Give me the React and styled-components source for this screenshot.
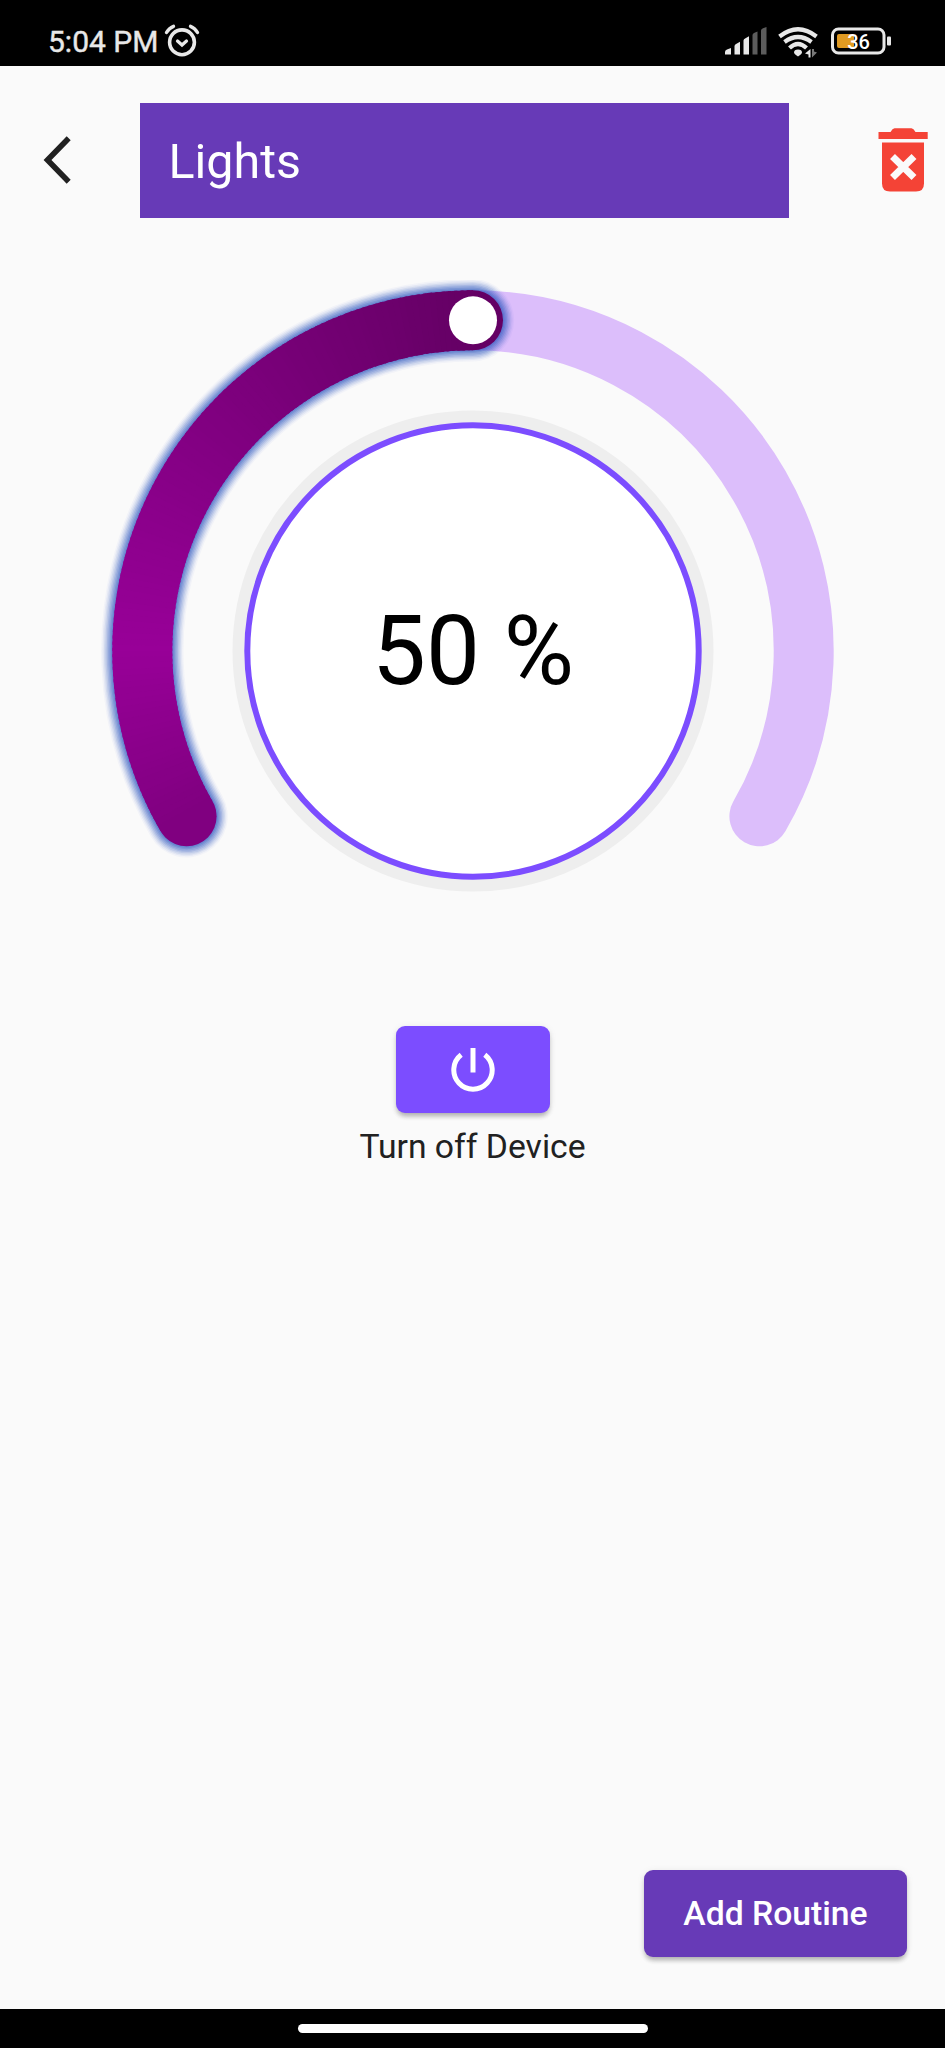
import React from 'react';
import styled, { createGlobalStyle } from 'styled-components';

const GlobalStyle = createGlobalStyle`
  * { box-sizing: border-box; }
  body { margin: 0; background: #fafafa; font-family: Roboto, "Liberation Sans", sans-serif; }
  button { font-family: inherit; border: 0; padding: 0; background: none; }
  svg { display: block; flex: none; }
`;

const Screen = styled.div`
  width: 945px;
  height: 2048px;
  display: flex;
  flex-direction: column;
  background: #fafafa;
  color: #212121;
`;

const StatusBar = styled.header`
  height: 66px;
  flex: none;
  display: flex;
  justify-content: space-between;
  padding: 24px 54px 0 48px;
  background: #000;
  color: #e8e8e8;
`;

const StatusGroup = styled.div`
  display: flex;
  align-items: flex-start;
  gap: ${(p) => p.$gap}px;
  padding-top: ${(p) => p.$drop || 0}px;
`;

const Clock = styled.span`
  font-size: 30px;
  line-height: 36px;
  font-weight: 400;
  -webkit-text-stroke: 0.4px #e8e8e8;
`;

const TitleRow = styled.div`
  display: flex;
  align-items: center;
  height: 115px;
  margin-top: 36.5px;
  padding: 0 16.5px 0 43px;
`;

const IconButton = styled.button`
  display: flex;
  color: ${(p) => p.$color};
`;

const TitleBox = styled.h1`
  width: 649px;
  height: 115px;
  margin: 0 89px 0 68.5px;
  padding: 3px 0 0 29px;
  line-height: 112px;
  font-size: 48.4px;
  font-weight: 400;
  color: #fff;
  background: #673ab7;
`;

const DialArea = styled.div`
  display: flex;
  justify-content: center;
  margin-top: 62.5px;
`;

const DialText = styled.text`
  font-family: Roboto, sans-serif;
  font-size: 96px;
  fill: #000;
`;

const DeviceControls = styled.section`
  display: flex;
  flex-direction: column;
  align-items: center;
  margin-top: 96px;
`;

const RaisedButton = styled.button`
  display: flex;
  align-items: center;
  justify-content: center;
  width: ${(p) => p.$width}px;
  height: 87px;
  border-radius: 9px;
  background: ${(p) => p.$color};
  color: #fff;
  font-size: 33.7px;
  font-weight: 500;
  box-shadow: 0 5px 5px -2px rgba(0, 0, 0, 0.18), 0 3px 5px rgba(0, 0, 0, 0.12),
    0 1px 8px rgba(0, 0, 0, 0.06);
`;

const Caption = styled.p`
  margin: 14px 0 0;
  font-size: 33.7px;
  line-height: 40px;
`;

const Footer = styled.div`
  display: flex;
  justify-content: flex-end;
  margin-top: auto;
  padding: 0 38px 52px 0;
`;

const NavBar = styled.footer`
  display: flex;
  justify-content: center;
  height: 39px;
  flex: none;
  padding-top: 15px;
  background: #000;
`;

const HomePill = styled.div`
  width: 350px;
  height: 9px;
  border-radius: 5px;
  background: #fff;
`;

const AlarmIcon = () => (
  <svg width="36" height="34" viewBox="0 0 36 34" fill="none" stroke="#e8e8e8" strokeLinecap="round">
    <circle cx="18" cy="18.3" r="12.4" strokeWidth="3.6" />
    <path d="M13.500 17l4.500 4 4.500-4" strokeWidth="3.2" />
    <path d="M2.500 8.500q2.500-4.500 7-6.200M33.500 8.500q-2.500-4.500-7-6.200" strokeWidth="3.4" />
  </svg>
);

const SignalIcon = () => (
  <svg width="42" height="28" viewBox="0 0 42 28">
    <path fill="#e8e8e8" d="M0 27.500V25q0-2 2-2.500l4-1.500V27.500zM9.500 27.500V19q0-1.500 2-2.200l3.500-2V27.500zM18.500 27.500V13.500q0-1.500 2-2.200l3.500-2V27.500z" />
    <path fill="#5c5c5c" d="M27.500 27.500V8q0-1.500 2-2.200l3-1.300V27.500zM36 27.500V3.500q0-1.500 2-2.200l3.500-1.300V27.500z" />
  </svg>
);

const WifiIcon = () => (
  <svg width="42" height="32" viewBox="0 0 42 32" fill="none" stroke="#e8e8e8" strokeWidth="4.200">
    <path d="M1.500 9.500Q20 -5 38.500 9.500" />
    <path d="M6.500 15Q20 5 33.500 15" />
    <path d="M11.500 21Q20 13 28.500 21" />
    <path d="M16 25.500q0-3 4-3t4 3q0 1.500-4 4q-4-2.500-4-4z" fill="#e8e8e8" stroke="none" />
    <path d="M32.500 22v8.500h-2V27.500l-3.500-1z" fill="#e8e8e8" stroke="none" />
    <path d="M34 30.500v-8.500h2v2.500l3 1z" fill="#777" stroke="none" />
  </svg>
);

const BatteryIcon = () => (
  <svg width="60" height="28" viewBox="0 0 60 28">
    <rect x="1.500" y="2" width="51.500" height="24" rx="6" fill="none" stroke="#e8e8e8" strokeWidth="3" />
    <rect x="56" y="9.500" width="4" height="9" rx="1" fill="#e8e8e8" />
    <rect x="6" y="7" width="17" height="14" rx="2" fill="#e09a22" />
    <text x="27.500" y="21.500" textAnchor="middle" fontFamily="Roboto, sans-serif" fontWeight="500" fontSize="20" fill="#fff">36</text>
  </svg>
);

const BackIcon = () => (
  <svg width="28" height="48" viewBox="0 0 28 48" fill="none" stroke="currentColor" strokeWidth="5.600">
    <path d="M25.700 2.300L4.500 24 25.700 45.700" />
  </svg>
);

const TrashIcon = () => (
  <svg width="50" height="64" viewBox="0 0 50 64">
    <path fill="currentColor" d="M0.500 4H12.500q2-3.700 4-3.700h17q2 0 4 3.700H49.700v7H0.500zM4 14.500h42v41q0 8-8 8H12q-8 0-8-8z" />
    <path d="M14.500 28.500l21.500 21M36 28.500l-21.500 21" stroke="#fafafa" strokeWidth="7" />
  </svg>
);

const PowerIcon = () => (
  <svg width="44" height="44" viewBox="0 0 44 44" fill="none" stroke="currentColor" strokeWidth="5">
    <path d="M22 0v24.500" />
    <path d="M10.200 6.800a19.200 19.200 0 1 0 23.600 0" />
  </svg>
);

const CX = 380;
const CY = 371;
const RADIUS = 330.7;
const BAR = 60;

const point = (deg) => {
  const a = (deg * Math.PI) / 180;
  return [CX + RADIUS * Math.cos(a), CY + RADIUS * Math.sin(a)];
};

const arc = (from, to) => {
  const [x1, y1] = point(from);
  const [x2, y2] = point(to);
  return `M${x1} ${y1}A${RADIUS} ${RADIUS} 0 ${to - from > 180 ? 1 : 0} 1 ${x2} ${y2}`;
};

// Purple brightens from the start of the arc to 180deg, then darkens to the thumb.
const shade = (deg) => {
  const v = deg < 180 ? 128 + ((deg - 150) / 30) * 24 : 152 - ((deg - 180) / 90) * 52;
  return `rgb(${v}, 0, ${v})`;
};

const GLOW = Array.from({ length: 8 }, (_, i) => i + 1);

const Dial = ({ value }) => {
  const end = 150 + (240 * value) / 100;
  const [sx, sy] = point(150);
  const [tx, ty] = point(end);
  const slices = Array.from({ length: Math.round(end - 150) }, (_, i) => 150 + i);
  return (
    <svg width="760" height="650" viewBox="0 0 760 650" fill="none">
      <path d={arc(150, 390)} stroke="#dcbefb" strokeWidth={BAR} strokeLinecap="round" />
      {GLOW.map((i) => (
        <path
          key={i}
          d={arc(150, end)}
          stroke="#2c57c0"
          strokeOpacity={0.23 - 0.027 * (i - 1)}
          strokeWidth={BAR + i * 2.8}
          strokeLinecap="round"
        />
      ))}
      <circle cx={sx} cy={sy} r={BAR / 2} fill={shade(150)} />
      <circle cx={tx} cy={ty} r={BAR / 2} fill={shade(end)} />
      {slices.map((d) => (
        <path key={d} d={arc(d, Math.min(d + 1.5, end))} stroke={shade(d)} strokeWidth={BAR} />
      ))}
      <circle cx={tx} cy={ty} r="24" fill="#fff" />
      <circle cx={CX} cy={CY} r="240.500" fill="#eee" />
      <circle cx={CX} cy={CY} r="225.700" fill="#fff" stroke="#7c4dff" strokeWidth="6" />
      <DialText x={CX} y={CY + 32.5} textAnchor="middle">{value} %</DialText>
    </svg>
  );
};

export default function App() {
  return (
    <Screen>
      <GlobalStyle />
      <StatusBar>
        <StatusGroup $gap={5.5}>
          <Clock>5:04 PM</Clock>
          <AlarmIcon />
        </StatusGroup>
        <StatusGroup $gap={11} $drop={3}>
          <SignalIcon />
          <WifiIcon />
          <BatteryIcon />
        </StatusGroup>
      </StatusBar>
      <TitleRow>
        <IconButton $color="#212121" aria-label="Back"><BackIcon /></IconButton>
        <TitleBox>Lights</TitleBox>
        <IconButton $color="#f44336" aria-label="Delete"><TrashIcon /></IconButton>
      </TitleRow>
      <DialArea>
        <Dial value={50} />
      </DialArea>
      <DeviceControls>
        <RaisedButton $width={154} $color="#7c4dff" aria-label="Power"><PowerIcon /></RaisedButton>
        <Caption>Turn off Device</Caption>
      </DeviceControls>
      <Footer>
        <RaisedButton $width={263} $color="#673ab7">Add Routine</RaisedButton>
      </Footer>
      <NavBar><HomePill /></NavBar>
    </Screen>
  );
}
